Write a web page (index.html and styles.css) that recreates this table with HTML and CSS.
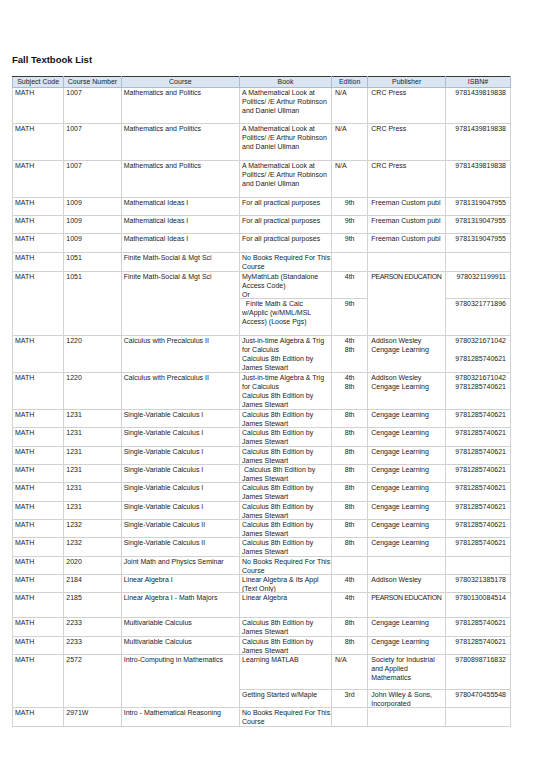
FILE: index.html
```html
<!DOCTYPE html>
<html>
<head>
<meta charset="utf-8">
<link rel="stylesheet" href="styles.css">
</head>
<body>
<div class="page">
<h1 class="title">Fall Textbook List</h1>
<table class="list">
<colgroup>
<col class="w-subj"><col class="w-num"><col class="w-course"><col class="w-book"><col class="w-ed"><col class="w-pub"><col class="w-isbn">
</colgroup>
<thead>
<tr class="head">
<th>Subject Code</th><th>Course Number</th><th>Course</th><th>Book</th><th>Edition</th><th>Publisher</th><th>ISBN#</th>
</tr>
</thead>
<tbody>
<tr class="h3"><td><div class="c">MATH</div></td><td><div class="c">1007</div></td><td><div class="c">Mathematics and Politics</div></td><td><div class="c">A Mathematical Look at<br>Politics/ /E Arthur Robinson<br>and Daniel Ullman</div></td><td class="ed-l"><div class="c">N/A</div></td><td class="pub"><div class="c">CRC Press</div></td><td class="isbn"><div class="c">9781439819838</div></td></tr>
<tr class="h3"><td><div class="c">MATH</div></td><td><div class="c">1007</div></td><td><div class="c">Mathematics and Politics</div></td><td><div class="c">A Mathematical Look at<br>Politics/ /E Arthur Robinson<br>and Daniel Ullman</div></td><td class="ed-l"><div class="c">N/A</div></td><td class="pub"><div class="c">CRC Press</div></td><td class="isbn"><div class="c">9781439819838</div></td></tr>
<tr class="h3"><td><div class="c">MATH</div></td><td><div class="c">1007</div></td><td><div class="c">Mathematics and Politics</div></td><td><div class="c">A Mathematical Look at<br>Politics/ /E Arthur Robinson<br>and Daniel Ullman</div></td><td class="ed-l"><div class="c">N/A</div></td><td class="pub"><div class="c">CRC Press</div></td><td class="isbn"><div class="c">9781439819838</div></td></tr>

<tr class="h1"><td><div class="c">MATH</div></td><td><div class="c">1009</div></td><td><div class="c">Mathematical Ideas I</div></td><td><div class="c">For all practical purposes</div></td><td class="ed"><div class="c">9th</div></td><td class="pub"><div class="c">Freeman Custom publ</div></td><td class="isbn"><div class="c">9781319047955</div></td></tr>
<tr class="h1"><td><div class="c">MATH</div></td><td><div class="c">1009</div></td><td><div class="c">Mathematical Ideas I</div></td><td><div class="c">For all practical purposes</div></td><td class="ed"><div class="c">9th</div></td><td class="pub"><div class="c">Freeman Custom publ</div></td><td class="isbn"><div class="c">9781319047955</div></td></tr>
<tr class="h1"><td><div class="c">MATH</div></td><td><div class="c">1009</div></td><td><div class="c">Mathematical Ideas I</div></td><td><div class="c">For all practical purposes</div></td><td class="ed"><div class="c">9th</div></td><td class="pub"><div class="c">Freeman Custom publ</div></td><td class="isbn"><div class="c">9781319047955</div></td></tr>

<tr class="h1b"><td><div class="c">MATH</div></td><td><div class="c">1051</div></td><td><div class="c">Finite Math-Social &amp; Mgt Sci</div></td><td><div class="c">No Books Required For This<br>Course</div></td><td class="ed"><div class="c"></div></td><td class="pub"><div class="c"></div></td><td class="isbn"><div class="c"></div></td></tr>
<tr class="h15"><td rowspan="2"><div class="c">MATH</div></td><td rowspan="2"><div class="c">1051</div></td><td rowspan="2"><div class="c">Finite Math-Social &amp; Mgt Sci</div></td><td><div class="c">MyMathLab (Standalone<br>Access Code)<br>Or</div></td><td class="ed"><div class="c">4th</div></td><td class="pub" rowspan="2"><div class="c tight">PEARSON EDUCATION</div></td><td class="isbn"><div class="c">9780321199911</div></td></tr>
<tr class="h2b"><td><div class="c">&nbsp;&nbsp;Finite Math &amp; Calc<br>w/Applic (w/MML/MSL<br>Access) (Loose Pgs)</div></td><td class="ed"><div class="c">9th</div></td><td class="isbn"><div class="c">9780321771896</div></td></tr>

<tr class="h4"><td><div class="c">MATH</div></td><td><div class="c">1220</div></td><td><div class="c">Calculus with Precalculus II</div></td><td><div class="c">Just-in-time Algebra &amp; Trig<br>for Calculus<br>Calculus 8th Edition by<br>James Stewart</div></td><td class="ed"><div class="c">4th<br>8th</div></td><td class="pub"><div class="c">Addison Wesley<br>Cengage Learning</div></td><td class="isbn"><div class="c">9780321671042<br><br>9781285740621</div></td></tr>
<tr class="h4"><td><div class="c">MATH</div></td><td><div class="c">1220</div></td><td><div class="c">Calculus with Precalculus II</div></td><td><div class="c">Just-in-time Algebra &amp; Trig<br>for Calculus<br>Calculus 8th Edition by<br>James Stewart</div></td><td class="ed"><div class="c">4th<br>8th</div></td><td class="pub"><div class="c">Addison Wesley<br>Cengage Learning</div></td><td class="isbn"><div class="c">9780321671042<br>9781285740621</div></td></tr>

<tr class="h1c"><td><div class="c">MATH</div></td><td><div class="c">1231</div></td><td><div class="c">Single-Variable Calculus I</div></td><td><div class="c">Calculus 8th Edition by<br>James Stewart</div></td><td class="ed"><div class="c">8th</div></td><td class="pub"><div class="c">Cengage Learning</div></td><td class="isbn"><div class="c">9781285740621</div></td></tr>
<tr class="h1c"><td><div class="c">MATH</div></td><td><div class="c">1231</div></td><td><div class="c">Single-Variable Calculus I</div></td><td><div class="c">Calculus 8th Edition by<br>James Stewart</div></td><td class="ed"><div class="c">8th</div></td><td class="pub"><div class="c">Cengage Learning</div></td><td class="isbn"><div class="c">9781285740621</div></td></tr>
<tr class="h1c"><td><div class="c">MATH</div></td><td><div class="c">1231</div></td><td><div class="c">Single-Variable Calculus I</div></td><td><div class="c">Calculus 8th Edition by<br>James Stewart</div></td><td class="ed"><div class="c">8th</div></td><td class="pub"><div class="c">Cengage Learning</div></td><td class="isbn"><div class="c">9781285740621</div></td></tr>
<tr class="h1c"><td><div class="c">MATH</div></td><td><div class="c">1231</div></td><td><div class="c">Single-Variable Calculus I</div></td><td><div class="c">&nbsp;Calculus 8th Edition by<br>James Stewart</div></td><td class="ed"><div class="c">8th</div></td><td class="pub"><div class="c">Cengage Learning</div></td><td class="isbn"><div class="c">9781285740621</div></td></tr>
<tr class="h1c"><td><div class="c">MATH</div></td><td><div class="c">1231</div></td><td><div class="c">Single-Variable Calculus I</div></td><td><div class="c">Calculus 8th Edition by<br>James Stewart</div></td><td class="ed"><div class="c">8th</div></td><td class="pub"><div class="c">Cengage Learning</div></td><td class="isbn"><div class="c">9781285740621</div></td></tr>
<tr class="h1c"><td><div class="c">MATH</div></td><td><div class="c">1231</div></td><td><div class="c">Single-Variable Calculus I</div></td><td><div class="c">Calculus 8th Edition by<br>James Stewart</div></td><td class="ed"><div class="c">8th</div></td><td class="pub"><div class="c">Cengage Learning</div></td><td class="isbn"><div class="c">9781285740621</div></td></tr>

<tr class="h1c"><td><div class="c">MATH</div></td><td><div class="c">1232</div></td><td><div class="c">Single-Variable Calculus II</div></td><td><div class="c">Calculus 8th Edition by<br>James Stewart</div></td><td class="ed"><div class="c">8th</div></td><td class="pub"><div class="c">Cengage Learning</div></td><td class="isbn"><div class="c">9781285740621</div></td></tr>
<tr class="h1c"><td><div class="c">MATH</div></td><td><div class="c">1232</div></td><td><div class="c">Single-Variable Calculus II</div></td><td><div class="c">Calculus 8th Edition by<br>James Stewart</div></td><td class="ed"><div class="c">8th</div></td><td class="pub"><div class="c">Cengage Learning</div></td><td class="isbn"><div class="c">9781285740621</div></td></tr>

<tr class="h1"><td><div class="c">MATH</div></td><td><div class="c">2020</div></td><td><div class="c">Joint Math and Physics Seminar</div></td><td><div class="c">No Books Required For This<br>Course</div></td><td class="ed"><div class="c"></div></td><td class="pub"><div class="c"></div></td><td class="isbn"><div class="c"></div></td></tr>
<tr class="h1"><td><div class="c">MATH</div></td><td><div class="c">2184</div></td><td><div class="c">Linear Algebra I</div></td><td><div class="c">Linear Algebra &amp; Its Appl<br>(Text Only)</div></td><td class="ed"><div class="c">4th</div></td><td class="pub"><div class="c">Addison Wesley</div></td><td class="isbn"><div class="c">9780321385178</div></td></tr>
<tr class="h14"><td><div class="c">MATH</div></td><td><div class="c">2185</div></td><td><div class="c">Linear Algebra I - Math Majors</div></td><td><div class="c">Linear Algebra</div></td><td class="ed"><div class="c">4th</div></td><td class="pub"><div class="c tight">PEARSON EDUCATION</div></td><td class="isbn"><div class="c">9780130084514</div></td></tr>
<tr class="h1"><td><div class="c">MATH</div></td><td><div class="c">2233</div></td><td><div class="c">Multivariable Calculus</div></td><td><div class="c">Calculus 8th Edition by<br>James Stewart</div></td><td class="ed"><div class="c">8th</div></td><td class="pub"><div class="c">Cengage Learning</div></td><td class="isbn"><div class="c">9781285740621</div></td></tr>
<tr class="h1"><td><div class="c">MATH</div></td><td><div class="c">2233</div></td><td><div class="c">Multivariable Calculus</div></td><td><div class="c">Calculus 8th Edition by<br>James Stewart</div></td><td class="ed"><div class="c">8th</div></td><td class="pub"><div class="c">Cengage Learning</div></td><td class="isbn"><div class="c">9781285740621</div></td></tr>

<tr class="h18"><td rowspan="2"><div class="c">MATH</div></td><td rowspan="2"><div class="c">2572</div></td><td rowspan="2"><div class="c">Intro-Computing in Mathematics</div></td><td><div class="c">Learning MATLAB</div></td><td class="ed-l"><div class="c">N/A</div></td><td class="pub"><div class="c">Society for Industrial<br>and Applied<br>Mathematics</div></td><td class="isbn"><div class="c">9780898716832</div></td></tr>
<tr class="h11"><td><div class="c">Getting Started w/Maple</div></td><td class="ed"><div class="c">3rd</div></td><td class="pub"><div class="c">John Wiley &amp; Sons,<br>Incorporated</div></td><td class="isbn"><div class="c">9780470455548</div></td></tr>

<tr class="h1"><td><div class="c">MATH</div></td><td><div class="c">2971W</div></td><td><div class="c">Intro - Mathematical Reasoning</div></td><td><div class="c">No Books Required For This<br>Course</div></td><td class="ed"><div class="c"></div></td><td class="pub"><div class="c"></div></td><td class="isbn"><div class="c"></div></td></tr>
</tbody>
</table>
</div>
</body>
</html>
```
FILE: styles.css
```css
html, body {
  margin: 0;
  padding: 0;
  background: #ffffff;
}
.page {
  padding: 54px 0 0 12px;
  font-family: "Liberation Sans", Arial, sans-serif;
  color: #222222;
}
.title {
  margin: 0 0 11px 0;
  font-size: 9.5px;
  line-height: 11px;
  font-weight: bold;
  color: #111;
}
.list {
  border-collapse: collapse;
  table-layout: fixed;
  width: 498px;
  font-size: 7px;
  line-height: 9px;
}
.w-subj { width: 51.3px; }
.w-num { width: 57.4px; }
.w-course { width: 118.3px; }
.w-book { width: 92px; }
.w-ed { width: 36.3px; }
.w-pub { width: 77.7px; }
.w-isbn { width: 65px; }

.head { height: 10.5px; }
.head th {
  background: #dbe5f1;
  border: 1px solid #a7bcd6;
  border-top: 1px solid #3a3a3a;
  font-weight: normal;
  text-align: center;
  padding: 0;
  line-height: 9px;
  white-space: nowrap;
  overflow: hidden;
  color: #222;
}
.list td {
  border: 1px solid #d2d2d2;
  padding: 0 0 0 2px;
  vertical-align: top;
  white-space: nowrap;
  overflow: hidden;
}
.c {
  height: 0;
  overflow: visible;
}
.tight { letter-spacing: -0.4px; }
.list td.ed { text-align: center; padding: 0; }
.list td.ed-l { text-align: left; padding-left: 3px; }
.list td.pub { padding-left: 3px; }
.list td.isbn { text-align: right; padding: 0 4px 0 0; }

.h1 { height: 18.4px; }
.h1b { height: 18.8px; }
.h1c { height: 18.35px; }
.h3 { height: 36.7px; }
.h15 { height: 27.8px; }
.h2b { height: 36.5px; }
.h4 { height: 37px; }
.h14 { height: 25px; }
.h18 { height: 35.2px; }
.h11 { height: 17.9px; }
```
